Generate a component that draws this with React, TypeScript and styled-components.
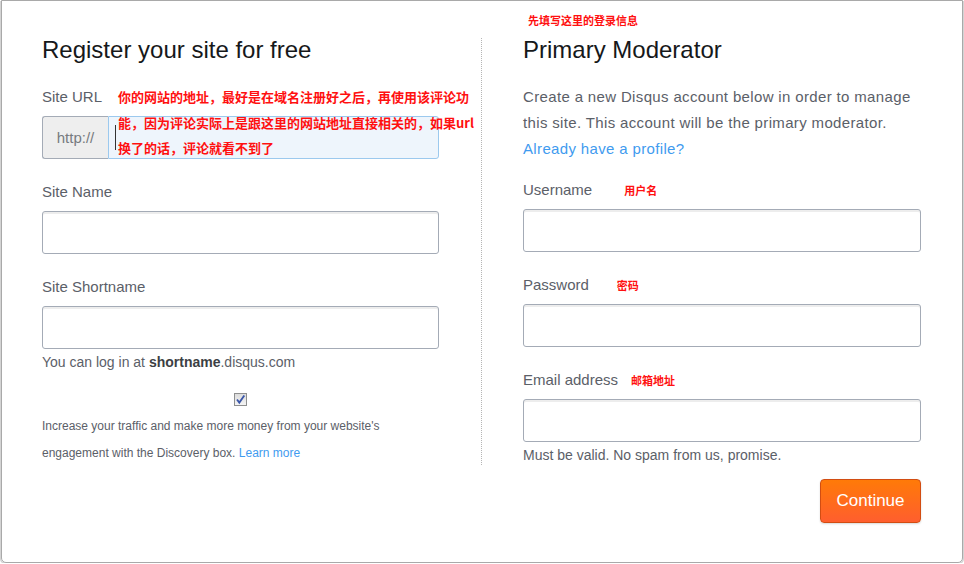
import React from 'react';
import styled, { createGlobalStyle } from 'styled-components';

const GlobalStyle = createGlobalStyle`
  html, body {
    margin: 0;
    padding: 0;
    background: #ffffff;
  }
  body {
    font-family: "Liberation Sans", Arial, "Noto Sans CJK SC", sans-serif;
    color: #5b6068;
  }
`;

const App: React.FC = () => {
  return (
    <>
      <GlobalStyle />
      <Frame>
        <Columns>
          <Column>
            <Title>Register your site for free</Title>

            <FieldLabel $gap={22}>Site URL</FieldLabel>
            <UrlGroup>
              <UrlPrefix>http://</UrlPrefix>
              <UrlField>
                <Caret />
              </UrlField>
            </UrlGroup>
            <Note $left={118} $top={84} $size={13} $line={25.5}>
              你的网站的地址，最好是在域名注册好之后，再使用该评论功
              <br />
              能，因为评论实际上是跟这里的网站地址直接相关的，如果url
              <br />
              换了的话，评论就看不到了
            </Note>

            <FieldLabel>Site Name</FieldLabel>
            <TextInput type="text" />

            <FieldLabel>Site Shortname</FieldLabel>
            <TextInput type="text" />
            <Help>
              You can log in at <strong>shortname</strong>.disqus.com
            </Help>

            <CheckRow>
              <CheckBox>
                <svg width="11" height="11" viewBox="0 0 11 11">
                  <path
                    d="M2 5.5 L4.3 8.6 L9.3 1.4"
                    fill="none"
                    stroke="#3a56a8"
                    strokeWidth="1.8"
                  />
                </svg>
              </CheckBox>
            </CheckRow>
            <Discovery>
              Increase your traffic and make more money from your website's
              engagement with the Discovery box. <Link href="#">Learn more</Link>
            </Discovery>
          </Column>

          <Divider />

          <Column>
            <Note $left={528} $top={12} $size={11} $line={16} $col={523}>
              先填写这里的登录信息
            </Note>
            <Title>Primary Moderator</Title>
            <Intro>
              Create a new Disqus account below in order to manage this site.
              This account will be the primary moderator.
              <br />
              <Link href="#">Already have a profile?</Link>
            </Intro>

            <FieldLabel $gap={18}>
              Username
              <InlineNote $offset={32}>用户名</InlineNote>
            </FieldLabel>
            <TextInput type="text" />

            <FieldLabel>
              Password
              <InlineNote $offset={28}>密码</InlineNote>
            </FieldLabel>
            <TextInput type="password" />

            <FieldLabel>
              Email address
              <InlineNote $offset={13}>邮箱地址</InlineNote>
            </FieldLabel>
            <TextInput type="email" />
            <Help>Must be valid. No spam from us, promise.</Help>

            <Actions>
              <ContinueButton type="button">Continue</ContinueButton>
            </Actions>
          </Column>
        </Columns>
      </Frame>
    </>
  );
};

const Frame = styled.div`
  box-sizing: border-box;
  width: 962px;
  height: 563px;
  margin-left: 1px;
  padding: 34px 0 0 40px;
  border: 1px solid #a9a9a9;
  border-radius: 0 0 5px 5px;
  box-shadow: -1px 1px 0 #d4d4d4, 1px 1px 0 #d4d4d4;
`;

const Columns = styled.div`
  display: grid;
  grid-template-columns: 397px 84px 398px;
  align-items: start;
`;

const Column = styled.div`
  position: relative;
  display: flex;
  flex-direction: column;
`;

const Divider = styled.div`
  justify-self: center;
  width: 0;
  height: 427px;
  margin-top: 3px;
  border-left: 1px dotted #b5b5b5;
`;

const Title = styled.h2`
  margin: 0;
  font-size: 24px;
  line-height: 30px;
  font-weight: 400;
  color: #16181a;
`;

const FieldLabel = styled.label<{ $gap?: number }>`
  display: flex;
  align-items: center;
  margin: ${(p) => p.$gap ?? 23}px 0 9px;
  font-size: 15px;
  line-height: 20px;
  color: #5b6068;
`;

const Note = styled.div<{
  $left: number;
  $top: number;
  $size: number;
  $line: number;
  $col?: number;
}>`
  position: absolute;
  left: ${(p) => p.$left - (p.$col ?? 42)}px;
  top: ${(p) => p.$top - 35}px;
  font-family: "Noto Sans CJK SC", sans-serif;
  font-size: ${(p) => p.$size}px;
  line-height: ${(p) => p.$line}px;
  font-weight: 700;
  color: #ff1010;
  white-space: nowrap;
  z-index: 2;
`;

const InlineNote = styled.span<{ $offset: number }>`
  margin-left: ${(p) => p.$offset}px;
  font-family: "Noto Sans CJK SC", sans-serif;
  font-size: 11px;
  font-weight: 700;
  color: #ff1010;
`;

const TextInput = styled.input`
  box-sizing: border-box;
  width: 100%;
  height: 43px;
  margin: 0;
  padding: 0 10px;
  border: 1px solid #a4abb6;
  border-radius: 3px;
  background: #fff;
  box-shadow: inset 0 2px 0 #ededed;
  font: inherit;
  outline: none;
`;

const UrlGroup = styled.div`
  display: flex;
  height: 43px;
`;

const UrlPrefix = styled.div`
  box-sizing: border-box;
  width: 66px;
  display: flex;
  align-items: center;
  justify-content: center;
  border: 1px solid #a4abb6;
  border-right: none;
  border-radius: 3px 0 0 3px;
  background: #eeeeee;
  font-size: 15px;
  color: #777b80;
`;

const UrlField = styled.div`
  position: relative;
  flex: 1;
  border: 1px solid #9cc9ee;
  border-radius: 0 3px 3px 0;
  background: #eef5fc;
`;

const Caret = styled.span`
  position: absolute;
  left: 6px;
  top: 8px;
  width: 1px;
  height: 25px;
  background: #333;
`;

const Help = styled.p`
  margin: 4px 0 0;
  font-size: 14px;
  line-height: 18px;
  color: #5b6068;

  strong {
    color: #3c3f44;
  }
`;

const CheckRow = styled.div`
  display: flex;
  justify-content: center;
  margin-top: 22px;
`;

const CheckBox = styled.span`
  box-sizing: border-box;
  display: flex;
  align-items: center;
  justify-content: center;
  width: 13px;
  height: 13px;
  border: 1px solid #8e8f8f;
  background: linear-gradient(#dcdcdc, #f4f4f4);
`;

const Discovery = styled.p`
  margin: 7px 0 0;
  font-size: 12px;
  line-height: 27px;
  color: #5b6068;
`;

const Link = styled.a`
  color: #3f9bef;
  text-decoration: none;
`;

const Intro = styled.p`
  margin: 19px 0 0;
  font-size: 15px;
  line-height: 26px;
  letter-spacing: 0.35px;
  color: #5b6068;
`;

const Actions = styled.div`
  display: flex;
  justify-content: flex-end;
  margin-top: 15px;
`;

const ContinueButton = styled.button`
  box-sizing: border-box;
  width: 101px;
  height: 44px;
  border: 1px solid #d24d12;
  border-radius: 4px;
  background: linear-gradient(#ff7a08, #ff5e2e);
  box-shadow: 0 1px 2px rgba(0, 0, 0, 0.15);
  font-family: inherit;
  font-size: 17px;
  color: #ffffff;
  cursor: pointer;
`;

export default App;
